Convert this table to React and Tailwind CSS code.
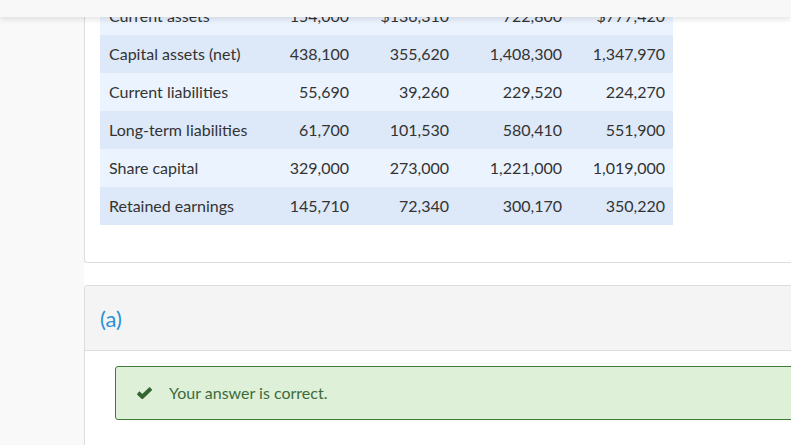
const rows = [
  ["Current assets", "154,000", "$136,310", "722,800", "$777,420"],
  ["Capital assets (net)", "438,100", "355,620", "1,408,300", "1,347,970"],
  ["Current liabilities", "55,690", "39,260", "229,520", "224,270"],
  ["Long-term liabilities", "61,700", "101,530", "580,410", "551,900"],
  ["Share capital", "329,000", "273,000", "1,221,000", "1,019,000"],
  ["Retained earnings", "145,710", "72,340", "300,170", "350,220"],
];

const colWidths = ["w-[100px]", "w-[100px]", "w-[113px]", "w-[103px]"];

export default function App() {
  return (
    <div className="relative flex h-[445px] w-[791px] overflow-hidden bg-white font-['Lato',sans-serif] text-[16px] text-[#333]">
      {/* top bar (fixed header) */}
      <div className="absolute left-0 right-0 top-0 z-10 h-[17px] bg-[#f8f8f8] shadow-[0_2px_6px_rgba(0,0,0,0.12)]" />

      {/* left rail */}
      <div className="w-[84px] shrink-0 bg-[#f9f9f9]" />

      {/* main column */}
      <div className="flex flex-1 flex-col">
        {/* card with table */}
        <div className="-mr-4 rounded-bl-[3px] border-b border-l border-[#dddddd] pb-[37px] pl-[15px]">
          <table className="-mt-[3px] border-collapse">
            <tbody>
              {rows.map((r, i) => (
                <tr key={r[0]} className={i % 2 === 0 ? "bg-[#ebf3fe]" : "bg-[#dde8f8]"}>
                  <td className="h-[38px] w-[157px] pl-[9px] text-left">{r[0]}</td>
                  {r.slice(1).map((v, j) => (
                    <td key={j} className={`${colWidths[j]} h-[38px] pr-[8px] text-right`}>
                      {v}
                    </td>
                  ))}
                </tr>
              ))}
            </tbody>
          </table>
        </div>

        {/* part (a) card */}
        <div className="-mr-4 mt-[22px] flex-1 rounded-tl-[3px] border-l border-t border-[#dddddd]">
          <div className="flex h-[65px] items-center border-b border-[#dddddd] bg-[#f4f4f4] pl-[15px] text-[22px] text-[#2b8fd8]">
            (a)
          </div>
          <div className="pl-[30px] pt-[15px]">
            <div className="flex h-[54px] items-center rounded-[3px] border border-[#3e7c3a] bg-[#dff0d8] pl-[21px] text-[#3c6b3c]">
              <svg width="15" height="12" viewBox="0 0 15 12" className="mr-[17px]">
                <path d="M1 5.8 L5.3 9.8 L14 1.4" fill="none" stroke="#356631" strokeWidth="4" strokeLinejoin="miter" />
              </svg>
              <span>Your answer is correct.</span>
            </div>
          </div>
        </div>
      </div>
    </div>
  );
}
